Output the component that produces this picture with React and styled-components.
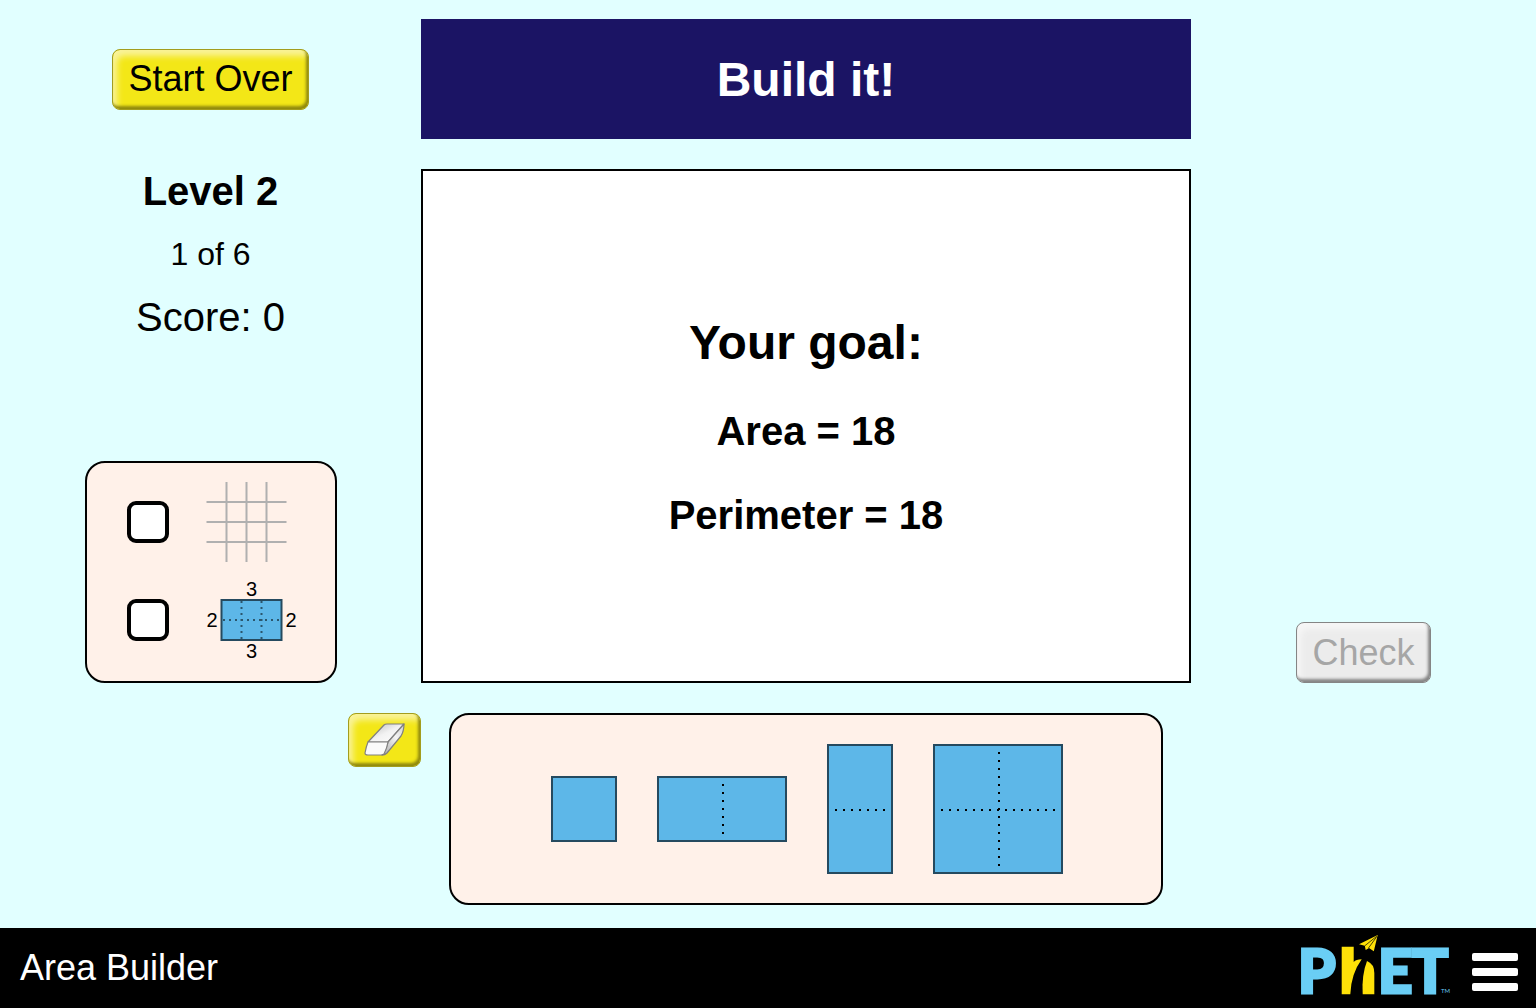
import React from "react";
import styled, { createGlobalStyle } from "styled-components";

const GlobalStyle = createGlobalStyle`
  *, *::before, *::after { box-sizing: border-box; }
  body {
    margin: 0;
    background: #e1ffff;
    color: #000;
    font-family: "Liberation Sans", Arial, sans-serif;
  }
  button { font-family: inherit; cursor: pointer; }
`;

const Page = styled.div`
  display: flex;
  flex-direction: column;
  min-height: 100vh;
`;

const PlayArea = styled.main`
  flex: 1;
  display: grid;
  grid-template-columns: minmax(0, 421fr) minmax(0, 770fr) minmax(0, 345fr);
  grid-template-rows: 120px 514px auto;
  row-gap: 30px;
  align-content: start;
  padding: 19px 0 23px;
`;

const Cell = styled.div`
  display: flex;
  flex-direction: column;
  align-items: ${(p) => p.$align || "center"};
  justify-content: ${(p) => p.$justify || "center"};
`;

const PushButton = styled.button`
  display: flex;
  align-items: center;
  justify-content: center;
  height: ${(p) => (p.$compact ? "54px" : "61px")};
  padding: 0 15px;
  border: 1px solid #a39d1e;
  border-radius: 8px;
  background: #f3e717;
  box-shadow:
    inset -2px -3px 3px #8f880d,
    inset 4px 6px 6px #f9f39a;
  color: #000;
  font-size: 36px;
  line-height: 42px;

  &:disabled {
    border-color: #858585;
    background: #ececec;
    box-shadow:
      inset -2px -3px 3px #858585,
      inset 4px 6px 6px #f6f6f6;
    color: #a6a6a6;
    cursor: default;
  }
`;

const Banner = styled.h1`
  display: flex;
  align-items: center;
  justify-content: center;
  margin: 0;
  padding-top: 2px;
  background: #1b1464;
  color: #fff;
  font-size: 48px;
  line-height: 54px;
`;

const Status = styled.section`
  display: flex;
  flex-direction: column;
  align-items: center;
  gap: 22px;
`;

const LevelName = styled.h2`
  margin: 0;
  font-size: 40px;
  line-height: 44px;
`;

const StatusText = styled.p`
  margin: 0;
  font-size: ${(p) => (p.$small ? "32px" : "40px")};
  line-height: ${(p) => (p.$small ? "38px" : "44px")};
`;

const Panel = styled.section`
  border: 2px solid #000;
  border-radius: 20px;
  background: #fff1e9;
`;

const OptionsPanel = styled(Panel)`
  display: flex;
  flex-direction: column;
  gap: 18px;
  padding: 19px 38px 21px 40px;
`;

const Option = styled.label`
  display: flex;
  align-items: center;
  gap: 37px;
  height: 80px;
  cursor: pointer;

  svg { display: block; overflow: visible; }
`;

const Checkbox = styled.input`
  appearance: none;
  width: 42px;
  height: 42px;
  margin: 0;
  border: 4px solid #000;
  border-radius: 9px;
  background: #fff;

  &:checked { box-shadow: inset 0 0 0 6px #fff; background: #000; }
`;

const Board = styled.section`
  display: flex;
  flex-direction: column;
  align-items: center;
  justify-content: center;
  gap: 38px;
  padding-top: 2px;
  border: 2px solid #000;
  background: #fff;
`;

const GoalTitle = styled.h2`
  margin: 0;
  font-size: 48px;
  line-height: 54px;
`;

const GoalLine = styled.p`
  margin: 0;
  font-size: 40px;
  font-weight: bold;
  line-height: 46px;
`;

const ShapeTray = styled(Panel)`
  display: flex;
  align-items: center;
  justify-content: center;
  gap: 40px;
  width: calc(100% - 56px);
  padding: 29px 0 29px 2px;
`;

const ShapeButton = styled.button`
  padding: 0;
  border: 0;
  background: none;

  svg { display: block; }
`;

const Footer = styled.footer`
  display: flex;
  align-items: center;
  height: 80px;
  padding: 0 18px 0 20px;
  background: #000;
  color: #fff;
`;

const SimTitle = styled.span`
  margin-right: auto;
  font-size: 36px;
  line-height: 42px;
`;

const LogoLink = styled.a`
  display: block;
  margin-right: 20px;

  svg { display: block; }
`;

const MenuButton = styled.button`
  display: flex;
  flex-direction: column;
  gap: 7px;
  padding: 8px 0 0;
  border: 0;
  background: none;
`;

const MenuBar = styled.span`
  width: 46px;
  height: 8px;
  border-radius: 2px;
  background: #fff;
`;

function GridIcon() {
  return (
    <svg width="91" height="80" viewBox="0 0 91 80" stroke="#b0b0b0" strokeWidth="2">
      {[20, 40, 60].map((v) => (
        <path key={v} d={`M${v + 0.5} 0V80M0.5 ${v}H80.5`} />
      ))}
    </svg>
  );
}

function DimensionsIcon() {
  return (
    <svg width="91" height="80" viewBox="0 0 91 80">
      <rect x="15.5" y="20" width="60" height="40" fill="#5db7e8" stroke="#254a5f" strokeWidth="2" />
      <path
        d="M35.5 21V60M55.5 21V60M17 40H75"
        stroke="#2b566d"
        strokeWidth="2"
        strokeDasharray="2 4"
      />
      <g fontSize="20" textAnchor="middle">
        <text x="45.5" y="16">3</text>
        <text x="45.5" y="78">3</text>
        <text x="6" y="47">2</text>
        <text x="85" y="47">2</text>
      </g>
    </svg>
  );
}

function ShapeIcon({ cols, rows }) {
  const w = cols * 64 + 2;
  const h = rows * 64 + 2;
  return (
    <svg width={w} height={h} viewBox={`0 0 ${w} ${h}`}>
      <rect x="1" y="1" width={w - 2} height={h - 2} fill="#5db7e8" stroke="#254a5f" strokeWidth="2" />
      <g stroke="#000" strokeWidth="2" strokeDasharray="2 6">
        {cols > 1 && <path d={`M${w / 2 + 1} 8V${h - 7}`} />}
        {rows > 1 && <path d={`M8 ${h / 2 + 1}H${w - 7}`} />}
      </g>
    </svg>
  );
}

function EraserIcon() {
  return (
    <svg width="41" height="34" viewBox="0 0 41 34" aria-hidden="true">
      <defs>
        <linearGradient id="eraserTop" x1="0" y1="0" x2="1" y2="1">
          <stop offset="0" stopColor="#b8b8b8" />
          <stop offset="0.5" stopColor="#f2f2f2" />
          <stop offset="1" stopColor="#ffffff" />
        </linearGradient>
        <linearGradient id="eraserSide" x1="0" y1="1" x2="1" y2="0">
          <stop offset="0" stopColor="#a8a8a8" />
          <stop offset="0.6" stopColor="#f4f4f4" />
          <stop offset="1" stopColor="#d0d0d0" />
        </linearGradient>
      </defs>
      <g stroke="#808080" strokeWidth="1.200" strokeLinejoin="round">
        <path d="M4 19L20 2Q21 1 23 1H40L24 19Z" fill="url(#eraserTop)" />
        <path d="M24 19L40 1Q40 8 37 13L23 30Q21 32 18 32Q23 25 24 19Z" fill="url(#eraserSide)" />
        <path d="M4 19H24Q23 25 20 31Q19 32 17 32H4Q1 32 1 30Q2 24 4 19Z" fill="#fafafa" />
      </g>
    </svg>
  );
}

function PhetLogo() {
  return (
    <svg width="156" height="80" viewBox="-4 0 156 80" role="img" aria-label="PhET">
      <g
        fill="#6acef5"
        stroke="#6acef5"
        strokeWidth="3"
        fontFamily="Lato, sans-serif"
        fontWeight="900"
        fontSize="60"
      >
        <text x="-2" y="65">P</text>
        <text x="78" y="65">E</text>
        <text x="112" y="65">
          T
          <tspan x="141" fontSize="6" fontWeight="400" strokeWidth="0">TM</tspan>
        </text>
      </g>
      <path
        d="M41.700 18.700H53.700V34Q56 31.500 61.700 31.300Q51 46 50.300 66.300H41.700Z"
        fill="#fee108"
      />
      <path d="M62.700 66.300Q61.500 47 67 33Q74.300 36 74.300 45V66.300Z" fill="#fee108" />
      <path d="M77.700 7L59 16.300L64.800 17.800L65.700 22L69 20L73.800 23.300Z" fill="#fee108" />
      <path d="M77 8L64.800 17.800M76.500 9L68.500 20" stroke="#000" strokeWidth="0.700" />
    </svg>
  );
}

const SHAPES = [
  { name: "1 by 1 square", cols: 1, rows: 1 },
  { name: "2 by 1 rectangle", cols: 2, rows: 1 },
  { name: "1 by 2 rectangle", cols: 1, rows: 2 },
  { name: "2 by 2 square", cols: 2, rows: 2 },
];

export default function App() {
  return (
    <Page>
      <GlobalStyle />
      <PlayArea>
        <Cell>
          <PushButton type="button">Start Over</PushButton>
        </Cell>
        <Banner>Build it!</Banner>
        <div />

        <Cell $justify="space-between">
          <Status>
            <LevelName>Level 2</LevelName>
            <StatusText $small>1 of 6</StatusText>
            <StatusText>Score: 0</StatusText>
          </Status>
          <OptionsPanel>
            <Option>
              <Checkbox type="checkbox" aria-label="Show grid" />
              <GridIcon />
            </Option>
            <Option>
              <Checkbox type="checkbox" aria-label="Show dimensions" />
              <DimensionsIcon />
            </Option>
          </OptionsPanel>
        </Cell>
        <Board>
          <GoalTitle>Your goal:</GoalTitle>
          <GoalLine>Area = 18</GoalLine>
          <GoalLine>Perimeter = 18</GoalLine>
        </Board>
        <Cell $justify="flex-end">
          <PushButton type="button" disabled>Check</PushButton>
        </Cell>

        <Cell $align="flex-end" $justify="flex-start">
          <PushButton type="button" $compact aria-label="Erase">
            <EraserIcon />
          </PushButton>
        </Cell>
        <Cell>
          <ShapeTray>
            {SHAPES.map((s) => (
              <ShapeButton key={s.name} type="button" aria-label={s.name}>
                <ShapeIcon cols={s.cols} rows={s.rows} />
              </ShapeButton>
            ))}
          </ShapeTray>
        </Cell>
      </PlayArea>
      <Footer>
        <SimTitle>Area Builder</SimTitle>
        <LogoLink href="#phet">
          <PhetLogo />
        </LogoLink>
        <MenuButton type="button" aria-label="Menu">
          <MenuBar />
          <MenuBar />
          <MenuBar />
        </MenuButton>
      </Footer>
    </Page>
  );
}
